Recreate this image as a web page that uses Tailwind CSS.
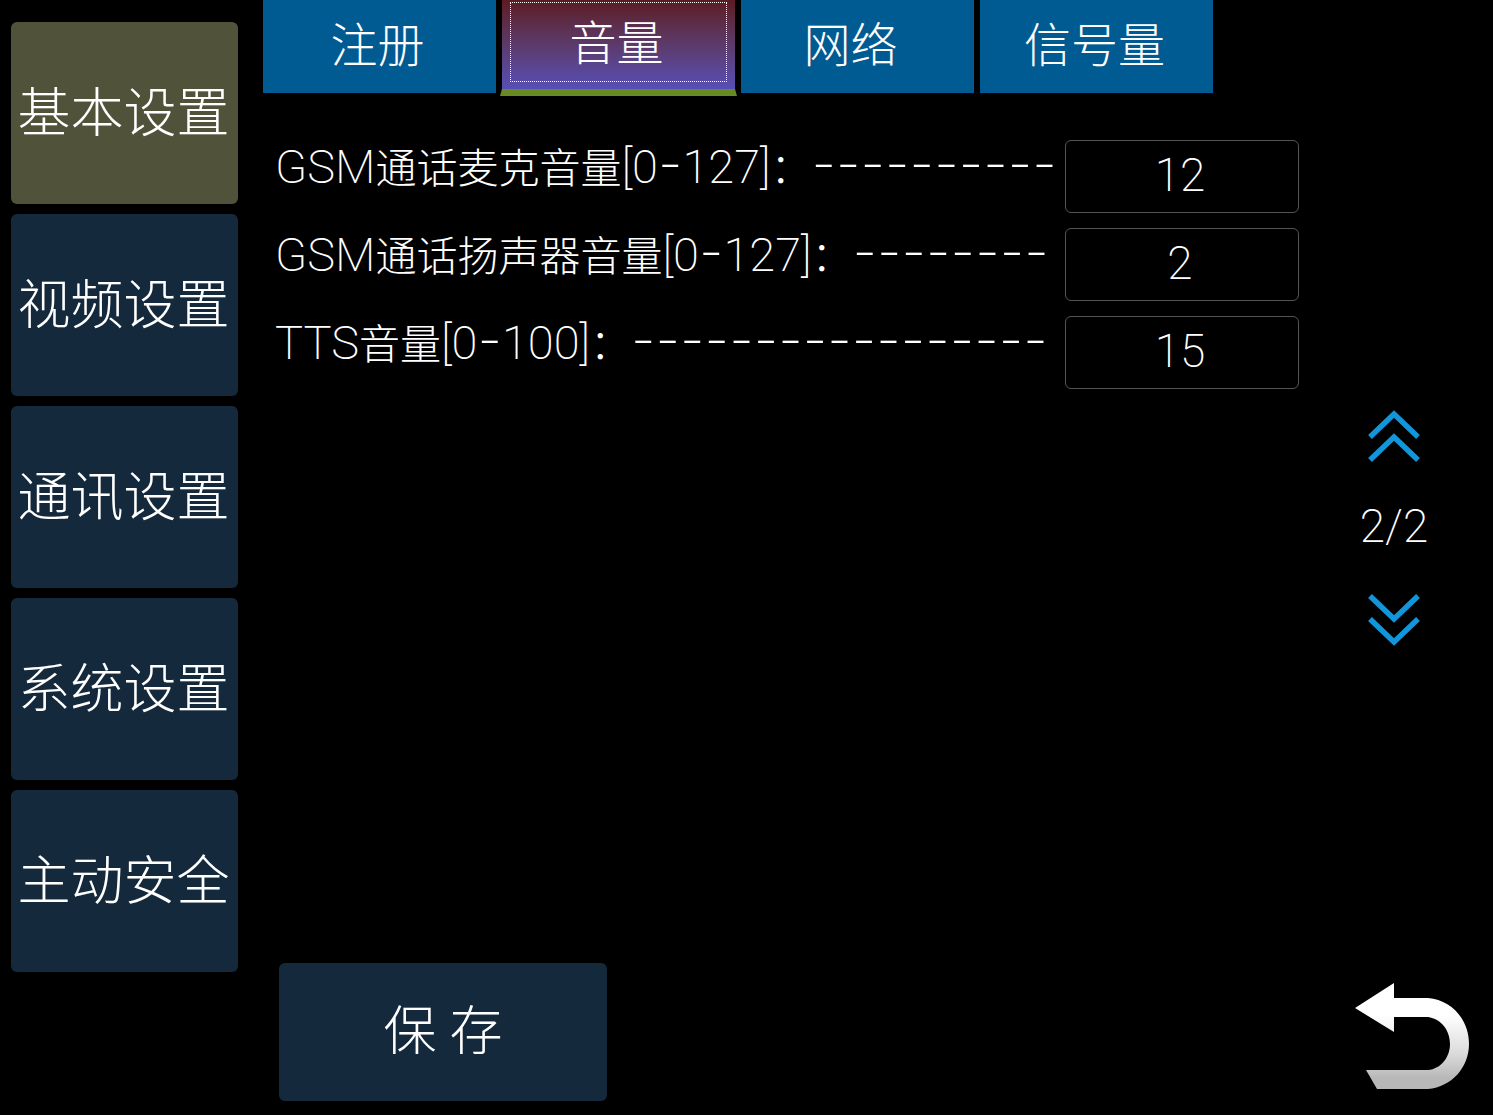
<!DOCTYPE html>
<html lang="zh-CN">
<head>
<meta charset="utf-8">
<meta name="viewport" content="width=device-width, initial-scale=1">
<title>基本设置</title>
<script src="https://cdn.jsdelivr.net/npm/@tailwindcss/browser@4"></script>
</head>
<body class="bg-black">
<div class="flex min-h-screen bg-black font-['Roboto','Noto_Sans_CJK_SC',sans-serif] font-light text-white">

  <nav class="flex w-[238px] shrink-0 flex-col gap-2.5 pt-[22px] pl-[11px]" aria-label="设置">
    <button type="button" aria-current="page" class="h-[182px] rounded-md bg-[#51523a] pt-0.5 pr-0.5 text-[53px] leading-none whitespace-nowrap">基本设置</button>
    <button type="button" class="h-[182px] rounded-md bg-[#14293b] pt-0.5 pr-0.5 text-[53px] leading-none whitespace-nowrap">视频设置</button>
    <button type="button" class="h-[182px] rounded-md bg-[#14293b] pt-0.5 pr-0.5 text-[53px] leading-none whitespace-nowrap">通讯设置</button>
    <button type="button" class="h-[182px] rounded-md bg-[#14293b] pt-0.5 pr-0.5 text-[53px] leading-none whitespace-nowrap">系统设置</button>
    <button type="button" class="h-[182px] rounded-md bg-[#14293b] pt-0.5 pr-0.5 text-[53px] leading-none whitespace-nowrap">主动安全</button>
  </nav>

  <main class="flex min-w-0 flex-1 flex-col">
    <div class="ml-[25px] flex gap-1.5" role="tablist">
      <button type="button" role="tab" class="h-[93px] w-[233px] bg-[#015b93] pr-1 pb-0.5 text-[47px] leading-none">注册</button>
      <button type="button" role="tab" aria-selected="true" class="relative h-[93px] w-[233px] bg-linear-to-b from-[#5c1a22] to-[#5650bd] pr-1 pb-1.5 text-[47px] leading-none">
        音量
        <span class="absolute inset-x-2 top-0.5 bottom-[11px] border border-dotted border-white"></span>
        <span class="absolute -inset-x-0.5 -bottom-[3px] h-[7px] bg-[#678b22] [clip-path:polygon(2px_0,calc(100%-2px)_0,100%_100%,0_100%)]"></span>
      </button>
      <button type="button" role="tab" class="h-[93px] w-[233px] bg-[#015b93] pr-3.5 pb-0.5 text-[47px] leading-none">网络</button>
      <button type="button" role="tab" class="h-[93px] w-[233px] bg-[#015b93] pr-1 pb-0.5 text-[47px] leading-none">信号量</button>
    </div>

    <div class="flex flex-1">
      <form id="volume" class="flex min-w-0 flex-1 flex-col gap-[15px] pt-[47px] pl-[37px]">
        <div class="flex h-[73px] gap-3.5">
          <label for="mic" class="min-w-0 flex-1 text-[47px] leading-[46px] font-extralight whitespace-nowrap">GSM<span class="text-[41px] font-light">通话麦克音量</span>[0<span class="font-['Inter'] text-[55px]">-</span>127]<span class="text-[41px] font-light">：</span><span class="font-['Inter'] text-[55px]">----------</span></label>
          <input id="mic" type="text" inputmode="numeric" value="12" class="w-[234px] rounded-md border border-[#555] bg-black pr-1 pb-1 text-center text-[46px] leading-none font-extralight">
        </div>
        <div class="flex h-[73px] gap-3.5">
          <label for="speaker" class="min-w-0 flex-1 text-[47px] leading-[46px] font-extralight whitespace-nowrap">GSM<span class="text-[41px] font-light">通话扬声器音量</span>[0<span class="font-['Inter'] text-[55px]">-</span>127]<span class="text-[41px] font-light">：</span><span class="font-['Inter'] text-[55px]">--------</span></label>
          <input id="speaker" type="text" inputmode="numeric" value="2" class="w-[234px] rounded-md border border-[#555] bg-black pr-1 pb-1 text-center text-[46px] leading-none font-extralight">
        </div>
        <div class="flex h-[73px] gap-3.5">
          <label for="tts" class="min-w-0 flex-1 text-[47px] leading-[46px] font-extralight whitespace-nowrap">TTS<span class="text-[41px] font-light">音量</span>[0<span class="font-['Inter'] text-[55px]">-</span>100]<span class="text-[41px] font-light">：</span><span class="font-['Inter'] text-[55px]">-----------------</span></label>
          <input id="tts" type="text" inputmode="numeric" value="15" class="w-[234px] rounded-md border border-[#555] bg-black pr-1 pb-1 text-center text-[46px] leading-none font-extralight">
        </div>
      </form>

      <div class="flex w-[194px] shrink-0 flex-col items-center justify-center gap-9 pr-1">
        <button type="button" aria-label="上一页">
          <svg class="block" width="52" height="52" viewBox="0 0 52 52" fill="none" stroke="#1296db" stroke-width="5.5"><path d="M2 27 26 4 50 27M2 50 26 27 50 50"/></svg>
        </button>
        <span class="pb-1 text-[46px] leading-[56px] font-extralight">2/2</span>
        <button type="button" aria-label="下一页">
          <svg class="block" width="52" height="52" viewBox="0 0 52 52" fill="none" stroke="#1296db" stroke-width="5.5"><path d="M2 2 26 25 50 2M2 25 26 48 50 25"/></svg>
        </button>
      </div>
    </div>

    <div class="mb-3.5 flex items-center justify-between pr-[23px] pl-[41px]">
      <button type="submit" form="volume" class="h-[138px] w-[328px] rounded-md bg-[#14293b] text-[53px] leading-none">保 存</button>
      <button type="button" aria-label="返回" class="pt-2.5">
        <svg class="block" width="115" height="108" viewBox="0 0 115 108">
          <defs><linearGradient id="silver" x1="0" y1="0" x2="0" y2="1"><stop offset=".3" stop-color="#fff"/><stop offset=".65" stop-color="#ddd"/><stop offset=".9" stop-color="#b8b8b8"/></linearGradient></defs>
          <path fill="url(#silver)" d="M0 25 39 0V15H73C97 17 114 37 114 61 114 84 97 104 73 106H22L11 87H73C86 86 95 74 95 61 95 47 86 36 73 34H39V49Z"/>
        </svg>
      </button>
    </div>
  </main>
</div>
</body>
</html>
